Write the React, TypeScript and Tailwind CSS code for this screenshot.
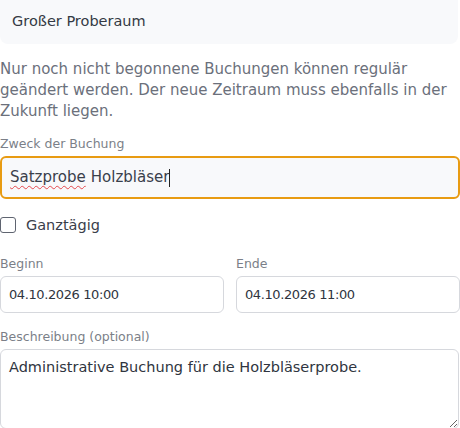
import { useState } from 'react';

const font = { fontFamily: '"DejaVu Sans", "Noto Sans", sans-serif' };

const Label = ({ children }: { children: React.ReactNode }) => (
  <div className="text-[12.5px] leading-[16px] text-[#7b7f88] mb-[4px]">{children}</div>
);

const App = () => {
  const [allDay, setAllDay] = useState(false);

  return (
    <div className="w-[460px] h-[428px] overflow-hidden bg-white" style={font}>
      <div className="w-[458px] h-[46px] -mt-[2px] pt-[2px] rounded-b-lg bg-[#f8f9fb] flex items-center px-3">
        <span className="text-[14.5px] text-[#343a44]">Großer Proberaum</span>
      </div>

      <p className="mt-[15px] text-[15px] leading-[21px] text-[#6b707b]">
        Nur noch nicht begonnene Buchungen können regulär geändert werden. Der neue Zeitraum muss ebenfalls in der
        Zukunft liegen.
      </p>

      <div className="mt-[14px]">
        <Label>Zweck der Buchung</Label>
        <div className="h-[43px] w-full rounded-md border-2 border-[#e89b12] bg-[#f8f9fb] flex items-center px-2 text-[15px] text-[#3a404b]">
          <span className="underline decoration-wavy decoration-[#e5484d] decoration-1 underline-offset-[3px]">
            Satzprobe
          </span>
          <span className="ml-[5px]">Holzbläser</span>
          <span className="w-px h-[18px] bg-[#222]" />
        </div>
      </div>

      <label className="mt-[16px] h-[20px] flex items-center gap-[10px] cursor-pointer">
        <input
          type="checkbox"
          checked={allDay}
          onChange={(e) => setAllDay(e.target.checked)}
          className="appearance-none w-[16px] h-[16px] rounded-[3px] border border-[#5f6470] bg-white"
        />
        <span className="text-[14.5px] leading-[20px] text-[#3a404b]">Ganztägig</span>
      </label>

      <div className="mt-[21px] grid grid-cols-2 gap-3">
        <div>
          <Label>Beginn</Label>
          <div className="h-[37px] rounded-md border border-[#d6d8dd] flex items-center px-2 text-[13px] tracking-[-0.4px] text-[#2f3540]">
            04.10.2026 10:00
          </div>
        </div>
        <div>
          <Label>Ende</Label>
          <div className="h-[37px] rounded-md border border-[#d6d8dd] flex items-center px-2 text-[13px] tracking-[-0.4px] text-[#2f3540]">
            04.10.2026 11:00
          </div>
        </div>
      </div>

      <div className="mt-[16px]">
        <Label>Beschreibung (optional)</Label>
        <textarea
          readOnly
          defaultValue="Administrative Buchung für die Holzbläserprobe."
          className="block w-[459px] h-[80px] rounded-md border border-[#d6d8dd] px-2 py-[6px] text-[14.5px] leading-[22px] text-[#2f3540] outline-none resize-y"
          style={font}
        />
      </div>
    </div>
  );
};

export default App;
